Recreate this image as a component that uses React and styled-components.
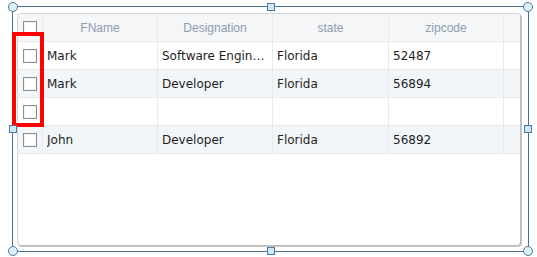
import React from "react";
import styled, { createGlobalStyle } from "styled-components";

const GlobalStyle = createGlobalStyle`
  html, body {
    margin: 0;
    padding: 0;
    background: #ffffff;
  }
`;

const columns = [
  { key: "check", title: "", width: "25px" },
  { key: "fname", title: "FName", width: "115px" },
  { key: "designation", title: "Designation", width: "115px" },
  { key: "state", title: "state", width: "116px" },
  { key: "zipcode", title: "zipcode", width: "115px" },
  { key: "filler", title: "", width: "1fr" },
];

const rows = [
  { fname: "Mark", designation: "Software Engineer", state: "Florida", zipcode: "52487" },
  { fname: "Mark", designation: "Developer", state: "Florida", zipcode: "56894" },
  { fname: "", designation: "", state: "", zipcode: "" },
  { fname: "John", designation: "Developer", state: "Florida", zipcode: "56892" },
];

const gridTemplate = columns.map((c) => c.width).join(" ");

const Stage = styled.div`
  width: 537px;
  height: 257px;
  padding: 6px 0 0 12px;
  box-sizing: border-box;
`;

const Frame = styled.div`
  position: relative;
  width: 517px;
  height: 246px;
  box-sizing: border-box;
  border: 1px solid #4b7199;
  padding: 6px 7px 5px 4px;
  display: flex;
`;

const GridBox = styled.div`
  flex: 1;
  border: 1px solid #d4d4d4;
  border-right-color: #bcbcbc;
  border-bottom-color: #bcbcbc;
  box-shadow: 1px 1px 0 #c6c6c6;
  border-radius: 4px;
  background: #ffffff;
  overflow: hidden;
`;

const Row = styled.div`
  display: grid;
  grid-template-columns: ${gridTemplate};
  height: 28px;
  box-sizing: border-box;
  border-bottom: 1px solid #e8eaed;
  background: ${(p) => (p.$header ? "#f5f6f7" : p.$alt ? "#f3f6f9" : "#ffffff")};
`;

const Cell = styled.div`
  display: flex;
  align-items: center;
  justify-content: ${(p) => (p.$center ? "center" : "flex-start")};
  padding: 0 ${(p) => (p.$center ? "0" : "4px")};
  border-right: ${(p) => (p.$last ? "none" : "1px solid #e8eaed")};
  min-width: 0;
  overflow: hidden;
  font-family: "DejaVu Sans", Verdana, sans-serif;
  font-size: 12px;
  color: #1e1e1e;
`;

const HeadText = styled.span`
  font-family: "Liberation Sans", Arial, sans-serif;
  font-size: 12px;
  color: #8d9db2;
`;

const CellText = styled.span`
  white-space: nowrap;
  overflow: hidden;
  text-overflow: ellipsis;
`;

const CheckBox = styled.span`
  display: block;
  width: 14px;
  height: 14px;
  box-sizing: border-box;
  border: 1px solid #8e8e8e;
  background: #ffffff;
  box-shadow: inset 0 0 0 1px #f2f2f2;
`;

const Highlight = styled.div`
  position: absolute;
  left: -1px;
  top: 25px;
  width: 32px;
  height: 95px;
  box-sizing: border-box;
  border: 4px solid #ff0000;
  pointer-events: none;
`;

const Handle = styled.span`
  position: absolute;
  box-sizing: border-box;
  width: ${(p) => (p.$round ? "10px" : "8px")};
  height: ${(p) => (p.$round ? "10px" : "8px")};
  margin: ${(p) => (p.$round ? "-5px 0 0 -5px" : "-4px 0 0 -4px")};
  border: 1px solid #4b7aa3;
  border-radius: ${(p) => (p.$round ? "50%" : "0")};
  background: ${(p) => (p.$round ? "#dcf0f6" : "#cfe6f6")};
`;

const handles = [
  { x: "0%", y: "0%", round: true },
  { x: "50%", y: "0%" },
  { x: "100%", y: "0%", round: true },
  { x: "100%", y: "50%" },
  { x: "100%", y: "100%", round: true },
  { x: "50%", y: "100%" },
  { x: "0%", y: "100%", round: true },
  { x: "0%", y: "50%" },
];

export default function App() {
  return (
    <>
      <GlobalStyle />
      <Stage>
        <Frame>
          <GridBox>
            <Row $header>
              {columns.map((c, i) => (
                <Cell key={c.key} $center $last={i === columns.length - 1}>
                  {c.key === "check" ? <CheckBox /> : <HeadText>{c.title}</HeadText>}
                </Cell>
              ))}
            </Row>
            {rows.map((r, ri) => (
              <Row key={ri} $alt={ri % 2 === 1}>
                {columns.map((c) => {
                  if (c.key === "check") {
                    return (
                      <Cell key={c.key} $center>
                        <CheckBox />
                      </Cell>
                    );
                  }
                  if (c.key === "filler") {
                    return <Cell key={c.key} $last />;
                  }
                  return (
                    <Cell key={c.key}>
                      <CellText>{r[c.key]}</CellText>
                    </Cell>
                  );
                })}
              </Row>
            ))}
          </GridBox>
          <Highlight />
          {handles.map((h, i) => (
            <Handle key={i} $round={h.round} style={{ left: h.x, top: h.y }} />
          ))}
        </Frame>
      </Stage>
    </>
  );
}
